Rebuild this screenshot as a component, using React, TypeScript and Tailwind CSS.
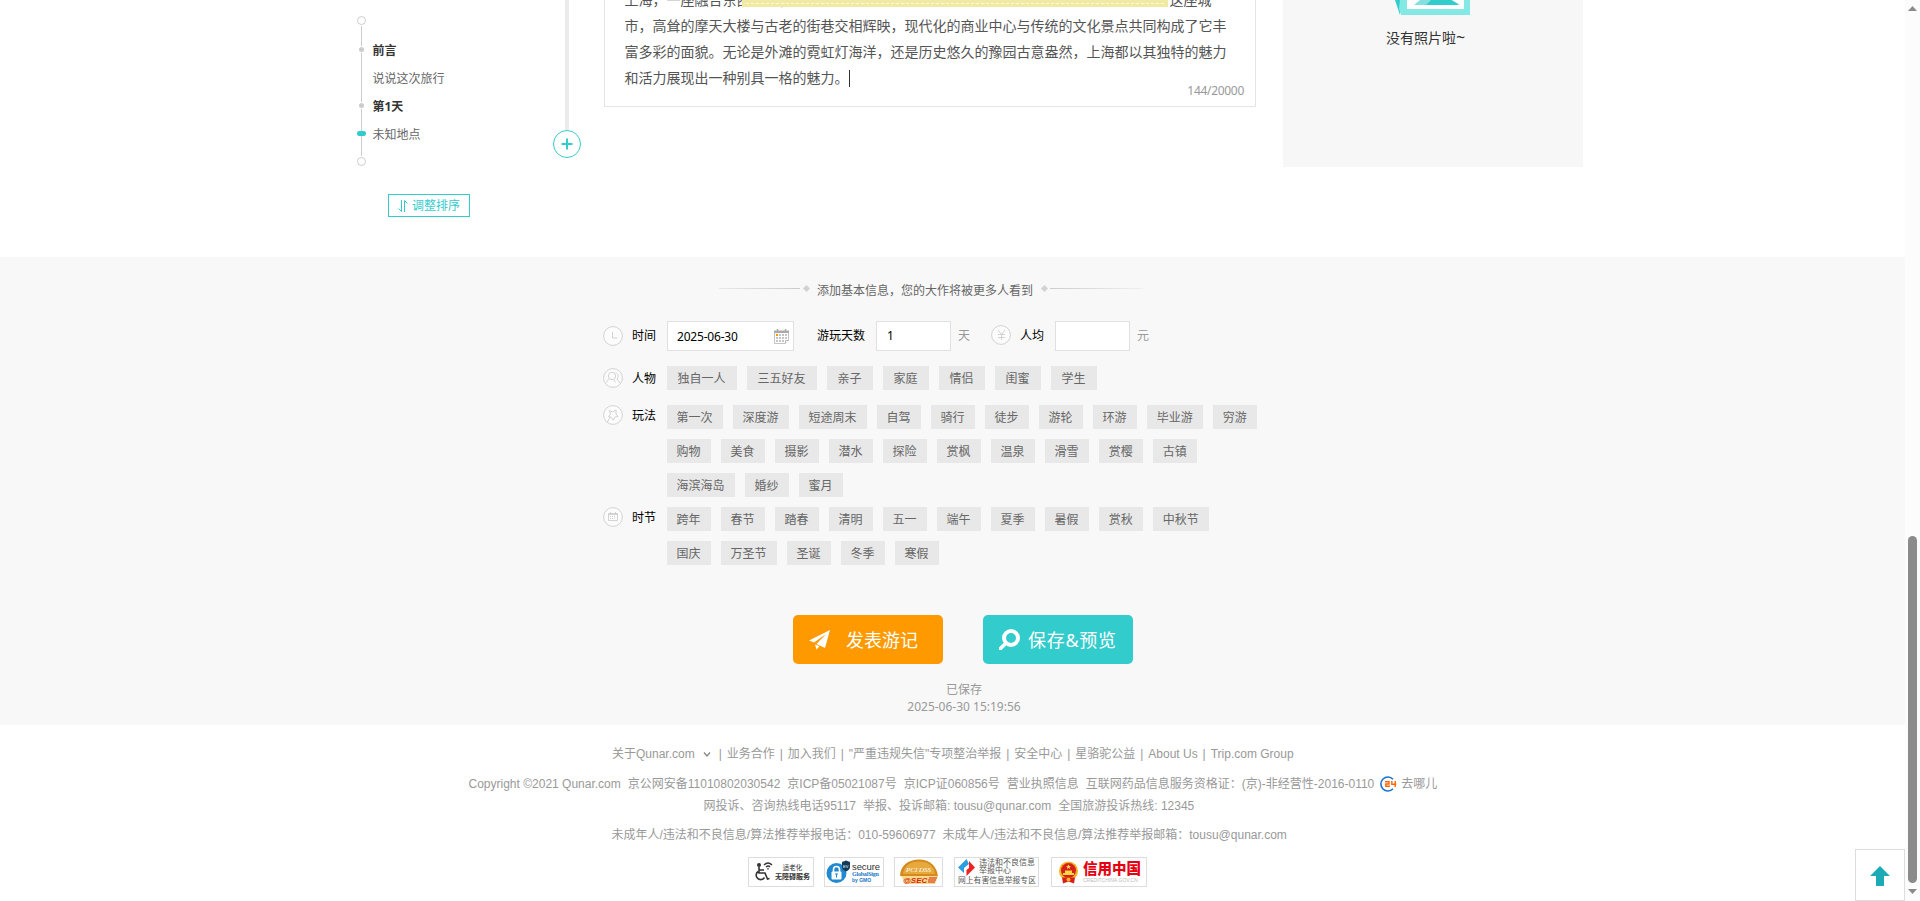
import React from "react";

const cjk = "font-['Noto_Sans','Noto_Sans_CJK_SC',sans-serif]";
const arial = "font-['Liberation_Sans','Noto_Sans_CJK_SC',sans-serif]";

const people = ["独自一人", "三五好友", "亲子", "家庭", "情侣", "闺蜜", "学生"];
const plays = [
  ["第一次", "深度游", "短途周末", "自驾", "骑行", "徒步", "游轮", "环游", "毕业游", "穷游"],
  ["购物", "美食", "摄影", "潜水", "探险", "赏枫", "温泉", "滑雪", "赏樱", "古镇"],
  ["海滨海岛", "婚纱", "蜜月"],
];
const seasons = [
  ["跨年", "春节", "踏春", "清明", "五一", "端午", "夏季", "暑假", "赏秋", "中秋节"],
  ["国庆", "万圣节", "圣诞", "冬季", "寒假"],
];

function Timeline() {
  return (
    <div className="flex w-[196px] flex-col pt-4">
      <div className="flex">
        <svg width="9" height="151" viewBox="0 0 9 151" className="shrink-0">
          <path d="M4.5 10v30M4.5 47v9M4.5 37v49M4.5 93v22M4.5 120v20" stroke="#ccc" />
          <circle cx="4.5" cy="4.5" r="4" fill="#fff" stroke="#ccc" />
          <circle cx="4.5" cy="33.5" r="3.5" fill="#fff" />
          <circle cx="4.5" cy="33.5" r="2.5" fill="#ccc" />
          <circle cx="4.5" cy="89.5" r="3.5" fill="#fff" />
          <circle cx="4.5" cy="89.5" r="2.5" fill="#ccc" />
          <rect x="0" y="115" width="9" height="5" rx="2.2" fill="#3cc" />
          <circle cx="4.5" cy="145.5" r="4" fill="#fff" stroke="#ccc" />
        </svg>
        <ul className="ml-[6.5px] mt-[21px] text-xs leading-7 text-[#666]">
          <li className="font-bold text-[#333]">前言</li>
          <li>说说这次旅行</li>
          <li className="font-bold text-[#333]">第1天</li>
          <li>未知地点</li>
        </ul>
      </div>
      <button className="ml-[31px] mt-[27px] flex h-[23px] w-[82px] items-center border border-[#3cc] pl-[9px] text-xs leading-none text-[#3cc]">
        <svg width="10" height="12" viewBox="0 0 10 12" className="mr-[4px]" fill="none" stroke="#3cc">
          <path d="M3.5 0v11.5M0.5 8.5l3 3M6.500 12V0.500M6.500 0.500l3 3" />
        </svg>
        调整排序
      </button>
    </div>
  );
}

function Editor() {
  return (
    <div className="relative h-[107px] w-[652px] overflow-hidden border border-t-0 border-[#e4e4e4] bg-white pl-[20px]">
      <div className="-ml-[0.5px] -mt-[13px] whitespace-nowrap text-sm leading-[26px] text-[#555]">
        <div className="flex">
          <span className="w-[545px] overflow-hidden">上海，一座融合东西方文化</span>
          <span>这座城</span>
        </div>
        <div>市，高耸的摩天大楼与古老的街巷交相辉映，现代化的商业中心与传统的文化景点共同构成了它丰</div>
        <div>富多彩的面貌。无论是外滩的霓虹灯海洋，还是历史悠久的豫园古意盎然，上海都以其独特的魅力</div>
        <div className="flex items-center">
          和活力展现出一种别具一格的魅力。
          <i className="h-[17px] w-px bg-[#333]" />
        </div>
      </div>
      <div className="absolute left-[137px] top-0 h-[7px] w-[426px] bg-[#f1eaa2] px-1 pt-[3px]">
        <div className="border-t border-dashed border-[#fbf9e2]" />
      </div>
      <div className="absolute bottom-[5px] right-[11px] text-xs leading-5 tracking-[-0.3px] text-[#999]">144/20000</div>
    </div>
  );
}

function EmptyPhotos() {
  return (
    <div className="ml-[27px] flex h-[167px] w-[300px] flex-col bg-[#f7f7f7]">
      <svg width="76" height="15" viewBox="0 0 76 15" className="ml-[112px]">
        <path d="M0 0h5v15z" fill="#3cc" />
        <path d="M5 0h70v15H6L4 9z" fill="#84e9e4" />
        <path d="M12 0h57v9H12z" fill="#fff" />
        <path d="M25 0h32l8 5H19z" fill="#84dfe0" />
        <path d="M36 0h20l7 4-1 1H31z" fill="#3cc" />
      </svg>
      <p className="ml-[103px] mt-[10px] text-sm leading-[26px] text-[#333]">
        没有照片啦<span className="text-base leading-none">~</span>
      </p>
    </div>
  );
}

function RoundIcon({ children, className = "" }: { children: React.ReactNode; className?: string }) {
  return (
    <svg width="20" height="20" viewBox="0 0 20 20" fill="none" stroke="#d2d2d2" className={"shrink-0 " + className}>
      <circle cx="10" cy="10" r="9.4" fill="#fcfcfc" />
      {children}
    </svg>
  );
}

function Tags({ rows, people: wide = false }: { rows: string[][]; people?: boolean }) {
  return (
    <div className="ml-[11px] flex flex-col gap-[10px]">
      {rows.map((row) => (
        <div key={row[0]} className="flex gap-[10px]">
          {row.map((t) => (
            <span
              key={t}
              className={
                "h-6 whitespace-nowrap bg-[#e8e8e8] text-xs leading-[26px] text-[#666] " +
                (wide ? "pl-[10.5px] pr-[11.5px]" : "pl-[9.5px] pr-[10.5px]")
              }
            >
              {t}
            </span>
          ))}
        </div>
      ))}
    </div>
  );
}

function CalendarGlyph() {
  return (
    <svg width="15" height="15" viewBox="0 0 15 15">
      <path d="M0.500 3.500h14v8l-3 3h-11z" fill="#fff" stroke="#c4c4c4" />
      <path d="M0 1.500h15V4H0z" fill="#aaa" />
      <path d="M3.500 0v3M11.500 0v3" stroke="#aaa" strokeWidth="1.500" />
      <path d="M5 6h8M2 9h11M2 12h8" stroke="#c4c4c4" strokeWidth="2" strokeDasharray="2 1" />
      <path d="M2 5h2v2H2z" fill="#f90" />
      <path d="M11.500 14.500v-3h3" fill="#fff" stroke="#bbb" />
    </svg>
  );
}

function BasicInfo() {
  return (
    <section className="h-[468px] w-[1905px] bg-[#f8f8f8] pt-[24px] text-xs text-black">
      <div className="ml-[719px] flex h-5 items-center text-[#666]">
        <i className="-mt-[5px] h-px w-[81px] bg-gradient-to-r from-[#e8e8e8] to-[#ccc]" />
        <i className="-mt-[5px] ml-1 h-[5px] w-[5px] rotate-45 bg-[#d2d2d2]" />
        <span className="ml-[8px] w-[216px] whitespace-nowrap">添加基本信息，您的大作将被更多人看到</span>
        <i className="-mt-[5px] ml-[9px] h-[5px] w-[5px] rotate-45 bg-[#d2d2d2]" />
        <i className="-mt-[5px] ml-[3px] h-px w-[93px] bg-gradient-to-r from-[#ccc] to-[#f0f0f0]" />
      </div>

      <div className="ml-[603px] mt-[20px] flex h-[30px] items-center">
        <RoundIcon>
          <path d="M9.500 6v6h5" />
        </RoundIcon>
        <span className="ml-[9px] w-6">时间</span>
        <div className="ml-[11px] flex h-[30px] w-[127px] items-center justify-between border border-[#e0e0e0] bg-white pl-[9px] pr-1">
          <span className="mt-px tracking-[-0.2px]">2025-06-30</span>
          <CalendarGlyph />
        </div>
        <span className="ml-[23px] w-12">游玩天数</span>
        <div className="ml-[11px] flex h-[30px] w-[75px] items-center border border-[#e0e0e0] bg-white pl-[10px]">1</div>
        <span className="ml-[7px] w-3 text-[#999]">天</span>
        <RoundIcon className="-mt-[2px] ml-[21px]">
          <path d="M7 5l3.500 4.500L14 5M10.500 9.500V15M7 9.500h7M7 12.500h7" />
        </RoundIcon>
        <span className="-mt-px ml-[9px] w-6">人均</span>
        <div className="ml-[11px] h-[30px] w-[75px] border border-[#e0e0e0] bg-white" />
        <span className="ml-[7px] text-[#999]">元</span>
      </div>

      <div className="ml-[603px] mt-[15px] flex h-[39px] items-start">
        <RoundIcon className="mt-[2px]">
          <circle cx="9" cy="8" r="3.700" />
          <path d="M3.500 14.500c.5-2 1.500-3 3-3.500M10.500 11.500l2 3M12.500 5c3 .5 3.500 4 1.500 6l3 4" />
        </RoundIcon>
        <span className="ml-[9px] w-6 leading-[26px]">人物</span>
        <Tags rows={[people]} people />
      </div>

      <div className="ml-[603px] flex h-[102px] items-start">
        <RoundIcon>
          <path d="M6.500 5.500l3 1.500 3.500-2v4l2 2.500-3.300.7-1.700 3-1.800-3-2.700-.7 2-2.500zM7 12l-2.500 5" />
        </RoundIcon>
        <span className="ml-[9px] w-6 leading-[22px]">玩法</span>
        <Tags rows={plays} />
      </div>

      <div className="ml-[603px] flex h-[108px] items-start">
        <RoundIcon>
          <path d="M5.500 6.500h9v7h-9zM5.500 7.500h9M7.500 5v2M12.500 5v2" />
          <path d="M7 9.500h6M7 11.500h6" strokeDasharray="1 1" />
        </RoundIcon>
        <span className="ml-[9px] w-6 leading-[22px]">时节</span>
        <Tags rows={seasons} />
      </div>

      <div className="ml-[793px] flex gap-10 text-lg text-white">
        <button className="flex h-[49px] w-[150px] items-center rounded-[5px] bg-[#f90] pl-[16px]">
          <svg width="21" height="20" viewBox="0 0 21 20" fill="#fff">
            <path d="M21 0L0 10.500l5 2L17 4 7.500 14l8.500 4zM6 14.500l1.500 5 3-3.300z" />
          </svg>
          <span className="ml-[16px]">发表游记</span>
        </button>
        <button className="flex h-[49px] w-[150px] items-center rounded-[5px] bg-[#3cc] pl-[16px]">
          <svg width="21" height="21" viewBox="0 0 21 21" fill="none" stroke="#fff">
            <circle cx="12" cy="9" r="7" strokeWidth="4" />
            <path d="M7 14l-5.500 5.500" strokeWidth="3.500" strokeLinecap="round" />
          </svg>
          <span className="ml-[8px] whitespace-nowrap tracking-[0.7px]">保存&amp;预览</span>
        </button>
      </div>

      <div className="ml-[793px] mt-4 w-[342px] text-center text-[#999]">
        <p className="h-[17px] leading-5">已保存</p>
        <p className="leading-5">2025-06-30 15:19:56</p>
      </div>
    </section>
  );
}

function Sep() {
  return <span className="w-[13px] text-center">|</span>;
}

function Badges() {
  const box = "flex h-[30px] items-center overflow-hidden border border-[#ddd] bg-white whitespace-nowrap ";
  return (
    <div className="ml-[748px] mt-[13px] flex">
      <div className={box + "w-[66px] pl-[6px]"}>
        <svg width="18" height="20" viewBox="0 0 18 20" fill="none" stroke="#333" strokeWidth="1.600">
          <circle cx="4" cy="3" r="1.200" fill="#333" />
          <path d="M4 5v6h6l2.500 6 2-.5M4 8h5M3 9.500a4.500 4.500 0 1 0 6.500 6" />
          <path d="M9 3c2.500-2.500 5.500-2.500 8 0M11 5c1.500-1.200 3-1.200 4 0M13 6v1.500" strokeWidth="1.300" />
        </svg>
        <div className="ml-[2px] text-center text-[6.500px] leading-[9px] text-[#333]">
          <div>适老化</div>
          <div className="text-[7px] font-bold">无障碍服务</div>
        </div>
      </div>
      <div className={box + "ml-[10px] w-[60px] pl-px"}>
        <svg width="25" height="24" viewBox="0 0 25 24" className="shrink-0">
          <circle cx="10.500" cy="13" r="10" fill="#2089cf" />
          <path d="M7.500 12V9.500a3 3 0 0 1 6 0V12" fill="none" stroke="#fff" strokeWidth="1.600" />
          <rect x="5.500" y="11.500" width="10" height="8" rx="1" fill="#fff" />
          <path d="M9 14h3M10.500 14v3.500" stroke="#2089cf" />
          <path d="M16 2l4-1.500L24 2v5c0 2-2 3.500-4 4.500-2-1-4-2.500-4-4.500z" fill="#123c5c" />
          <text x="17" y="7.500" fontSize="4" fill="#fff">EV</text>
        </svg>
        <div className="ml-px leading-none">
          <div className="text-[9.500px] leading-[9px] tracking-[-0.1px] text-[#333]">secure</div>
          <div className="font-['Liberation_Serif',serif] text-[6px] font-bold leading-[7px] tracking-[-0.2px] text-[#1877c9]">GlobalSign</div>
          <div className="text-[5px] font-bold leading-[5px] text-[#1877c9]">by GMO</div>
        </div>
      </div>
      <div className={box + "ml-[10px] w-[49px] justify-center"}>
        <svg width="45" height="28" viewBox="0 0 45 28">
          <path d="M4 18C4 8 12 1.500 23 1.500S41 8 42 19z" fill="#d58a1c" />
          <path d="M7 16C8 8 14 3.500 23 3.500S38 8 39 16z" fill="#e7a93d" />
          <text x="10" y="14" fontSize="7" fontStyle="italic" fontFamily="Liberation Serif" fill="#fff">PCI DSS</text>
          <path d="M5 18h37l-3 8H10z" fill="#f6d98a" />
          <text x="7" y="25" fontSize="8" fontWeight="bold" fontStyle="italic" fontFamily="Liberation Sans" fill="#d9240f">@SEC</text>
          <path d="M33 20h8M32 22h8M32 24h7" stroke="#d9240f" />
        </svg>
      </div>
      <div className={box + "ml-[11px] w-[85px] flex-col !items-start pl-[3px]"}>
        <div className="flex h-[18px] items-center">
          <svg width="17" height="17" viewBox="0 0 17 17">
            <path d="M8.500 0L0 8.500 6 14V9l5-4z" fill="#2a9ee0" />
            <path d="M11 2l6 6.500L8.500 17V11L11 9z" fill="#e22" />
          </svg>
          <div className="ml-[4px] text-[8px] leading-[8px] text-[#555]">
            <div>违法和不良信息</div>
            <div>举报中心</div>
          </div>
        </div>
        <div className="text-[7.800px] leading-[10px] text-[#555]">网上有害信息举报专区</div>
      </div>
      <div className={box + "ml-[12px] w-[96px] pl-[6px]"}>
        <svg width="21" height="23" viewBox="0 0 21 23" className="shrink-0">
          <circle cx="10.500" cy="10" r="9.500" fill="#efb524" />
          <circle cx="10.500" cy="9.500" r="7.500" fill="#d8201b" />
          <path d="M5 12h11v2H5zM7 9.500h7V12H7zM10.500 3.500l.8 1.500h1.600l-1.200 1.200.4 1.700-1.600-.9-1.600.9.400-1.700L8.100 5h1.600z" fill="#ffd84a" />
          <path d="M4 16.500h13l-1 6-5.500-2-5.500 2z" fill="#d8201b" />
          <circle cx="10.500" cy="18.500" r="2" fill="#efb524" />
        </svg>
        <div className="ml-[4px]">
          <div className="text-[14.500px] font-black leading-[16px] text-[#e60012]">信用中国</div>
          <div className="text-[5px] leading-[6px] text-[#bbb]">CREDITCHINA.GOV.CN</div>
        </div>
      </div>
    </div>
  );
}

function Footer() {
  return (
    <footer className={"h-[176px] w-[1905px] bg-white pt-[20px] text-xs leading-[18px] whitespace-nowrap text-[#999] " + arial}>
      <div className="ml-[612px] flex">
        <span>关于Qunar.com</span>
        <svg width="8" height="5" viewBox="0 0 8 5" className="ml-[8px] mr-[3px] mt-[7px]" fill="none" stroke="#888" strokeWidth="1.300">
          <path d="M1 .5L4 4 7 .5" />
        </svg>
        <Sep />
        <span>业务合作</span>
        <Sep />
        <span>加入我们</span>
        <Sep />
        <span>"严重违规失信"专项整治举报</span>
        <Sep />
        <span>安全中心</span>
        <Sep />
        <span>星骆驼公益</span>
        <Sep />
        <span>About Us</span>
        <Sep />
        <span>Trip.com Group</span>
      </div>
      <div className="ml-[468.5px] mt-[12px] flex gap-[7px]">
        <span>Copyright ©2021 Qunar.com</span>
        <span>京公网安备11010802030542</span>
        <span>京ICP备05021087号</span>
        <span>京ICP证060856号</span>
        <span>营业执照信息</span>
        <span>互联网药品信息服务资格证：(京)-非经营性-2016-0110</span>
        <span className="-ml-px flex">
          <svg width="17" height="16" viewBox="0 0 17 16" className="mr-[4px] mt-px" fill="none">
            <path d="M13 3.200A7 7 0 1 0 13 12.800" stroke="#1a72d0" strokeWidth="1.600" />
            <path
              d="M5 5.800h4v2.200H5.800v2.200H10M11.800 5v3.200h4.500M15.200 5v6"
              stroke="#f60"
              strokeWidth="1.400"
            />
          </svg>
          去哪儿
        </span>
      </div>
      <div className="ml-[703.5px] mt-[4px] flex gap-[7px]">
        <span>网投诉、咨询热线电话95117</span>
        <span>举报、投诉邮箱: tousu@qunar.com</span>
        <span>全国旅游投诉热线: 12345</span>
      </div>
      <div className="ml-[611.5px] mt-[11px] flex gap-[7px]">
        <span>未成年人/违法和不良信息/算法推荐举报电话：010-59606977</span>
        <span>未成年人/违法和不良信息/算法推荐举报邮箱：tousu@qunar.com</span>
      </div>
      <Badges />
    </footer>
  );
}

export default function App() {
  return (
    <div className={"relative flex h-[901px] w-[1920px] overflow-hidden bg-white " + cjk}>
      <main className="w-[1905px] shrink-0">
        <section className="flex h-[257px] items-start pl-[357px]">
          <Timeline />
          <div className="flex w-[28px] flex-col items-center">
            <i className="h-[130px] w-1 bg-[#ebebeb]" />
            <svg width="28" height="28" viewBox="0 0 28 28" fill="none" stroke="#3cc">
              <circle cx="14" cy="14" r="13.500" />
              <path d="M8.500 14h11M14 8.500v11" strokeWidth="2" />
            </svg>
          </div>
          <div className="ml-[23px] mr-px w-[651px]">
            <Editor />
          </div>
          <EmptyPhotos />
        </section>
        <BasicInfo />
        <Footer />
      </main>
      <aside className="flex w-[15px] flex-col items-center bg-[#fcfcfc]">
        <svg width="9" height="5" viewBox="0 0 9 5" className="mt-[6px]">
          <path d="M0 5L4.500 0 9 5z" fill="#8b8b8b" />
        </svg>
        <div className="mt-[525px] h-[347px] w-[9px] rounded-full bg-[#8b8b8b]" />
        <svg width="9" height="5" viewBox="0 0 9 5" className="mt-[6px]">
          <path d="M0 0h9L4.500 5z" fill="#8b8b8b" />
        </svg>
      </aside>
      <button className="absolute left-[1855px] top-[849px] flex h-[52px] w-[50px] items-center justify-center border border-[#ddd] bg-white">
        <svg width="20" height="20" viewBox="0 0 20 20" className="mt-px">
          <path d="M10 0l10 10h-6v10H6V10H0z" fill="#1cabb6" />
        </svg>
      </button>
    </div>
  );
}
